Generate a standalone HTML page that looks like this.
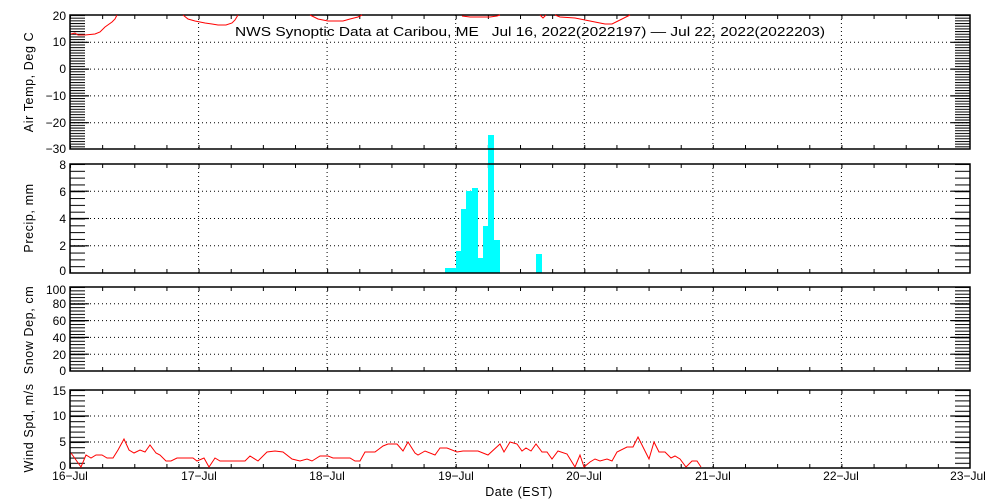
<!DOCTYPE html>
<html><head><meta charset="utf-8"><style>
html,body{margin:0;padding:0;background:#fff;}
svg{display:block;font-family:"Liberation Sans",sans-serif;font-size:12px;}
</style></head><body>
<svg width="1000" height="500" viewBox="0 0 1000 500" xmlns="http://www.w3.org/2000/svg">
<defs>
<pattern id="p1" x="0" y="15" width="20" height="2.68" patternUnits="userSpaceOnUse"><rect x="0" y="0" width="20" height="1" fill="#000"/></pattern>
<pattern id="p2" x="0" y="164" width="20" height="6.8125" patternUnits="userSpaceOnUse"><rect x="0" y="0" width="20" height="1" fill="#000"/></pattern>
<pattern id="p3" x="0" y="287" width="20" height="3.36" patternUnits="userSpaceOnUse"><rect x="0" y="0" width="20" height="1" fill="#000"/></pattern>
<pattern id="p4" x="0" y="390" width="20" height="5.2" patternUnits="userSpaceOnUse"><rect x="0" y="0" width="20" height="1" fill="#000"/></pattern>
<pattern id="px" x="70" y="0" width="32.143" height="10" patternUnits="userSpaceOnUse"><rect x="0" y="0" width="1" height="10" fill="#000"/></pattern>
</defs>
<rect width="1000" height="500" fill="#fff"/>

<rect x="70" y="15" width="15" height="134" fill="url(#p1)"/>
<rect x="955" y="15" width="15" height="134" fill="url(#p1)"/>
<rect x="70" y="164" width="15" height="109" fill="url(#p2)"/>
<rect x="955" y="164" width="15" height="109" fill="url(#p2)"/>
<rect x="70" y="287" width="15" height="84" fill="url(#p3)"/>
<rect x="955" y="287" width="15" height="84" fill="url(#p3)"/>
<rect x="70" y="390" width="15" height="78" fill="url(#p4)"/>
<rect x="955" y="390" width="15" height="78" fill="url(#p4)"/>
<g>
<rect x="70" y="15" width="900" height="4" fill="url(#px)"/>
<rect x="70" y="145" width="900" height="4" fill="url(#px)"/>
<rect x="70" y="164" width="900" height="4" fill="url(#px)"/>
<rect x="70" y="269" width="900" height="4" fill="url(#px)"/>
<rect x="70" y="287" width="900" height="4" fill="url(#px)"/>
<rect x="70" y="367" width="900" height="4" fill="url(#px)"/>
<rect x="70" y="390" width="900" height="4" fill="url(#px)"/>
<rect x="70" y="464" width="900" height="4" fill="url(#px)"/>
</g>

<g stroke="#000" stroke-width="1" stroke-dasharray="1,3" fill="none">
<path d="M70 42.3H970M70 69.1H970M70 95.9H970M70 122.7H970"/>
<path d="M70 191.2H970M70 218.5H970M70 245.8H970"/>
<path d="M70 303.8H970M70 320.6H970M70 337.4H970M70 354.2H970"/>
<path d="M70 416H970M70 442H970"/>
<path d="M198.6 15V149M327.1 15V149M455.7 15V149M584.3 15V149M712.9 15V149M841.4 15V149"/>
<path d="M198.6 164V273M327.1 164V273M455.7 164V273M584.3 164V273M712.9 164V273M841.4 164V273"/>
<path d="M198.6 287V371M327.1 287V371M455.7 287V371M584.3 287V371M712.9 287V371M841.4 287V371"/>
<path d="M198.6 390V468M327.1 390V468M455.7 390V468M584.3 390V468M712.9 390V468M841.4 390V468"/>
</g>
<g stroke="#000" stroke-width="1.2">
<path d="M70 42.3h19M70 69.1h19M70 95.9h19M70 122.7h19M951 42.3h19M951 69.1h19M951 95.9h19M951 122.7h19"/>
<path d="M70 191.2h19M70 218.5h19M70 245.8h19M951 191.2h19M951 218.5h19M951 245.8h19"/>
<path d="M70 303.8h19M70 320.6h19M70 337.4h19M70 354.2h19M951 303.8h19M951 320.6h19M951 337.4h19M951 354.2h19"/>
<path d="M70 416h19M70 442h19M951 416h19M951 442h19"/>
</g>

<g fill="#00ffff">
<rect x="445" y="268" width="11" height="5"/>
<rect x="456" y="251" width="5" height="22"/>
<rect x="461" y="209" width="5" height="64"/>
<rect x="466" y="191" width="6" height="82"/>
<rect x="472" y="188" width="6" height="85"/>
<rect x="478" y="258" width="5" height="15"/>
<rect x="483" y="226" width="5" height="47"/>
<rect x="488" y="135" width="6" height="138"/>
<rect x="494" y="240" width="6" height="33"/>
<rect x="536" y="254" width="6" height="19"/>
</g>

<g stroke="#000" stroke-width="1.5" fill="none">
<rect x="70" y="15" width="900" height="134"/>
<rect x="70" y="164" width="900" height="109"/>
<rect x="70" y="287" width="900" height="84"/>
<rect x="70" y="390" width="900" height="78"/>
</g>

<g stroke="#f00" stroke-width="1" fill="none">
<polyline points="71,34 75,33 78,35 85,35 95,34 100,32 105,27 112,22 115,19 117,15"/>
<polyline points="183,15 188,19 195,21 205,23 212,24 218,25 226,25 232,23 235,20 238,15"/>
<polyline points="310,15 318,19 328,21 343,21 350,19 358,17 362,15"/>
<polyline points="462,16 470,17 490,17 497,16 500,15"/>
<polyline points="540,15 543,18 546,15"/>
<polyline points="555,15 560,17 575,18 585,20 595,22 605,24 612,24 620,20 630,15"/>
</g>

<polyline stroke="#f00" stroke-width="1" fill="none" points="71,453 81,467 86,455 91,458 96,455 102,455 107,458 113,458 118,450 124,439 129,450 134,453 140,450 145,452 150,445 156,453 160,455 166,461 171,461 177,458 185,458 193,458 197,461 204,458 209,467 215,458 220,461 245,461 250,456 258,461 267,452 275,451 283,452 292,459 300,461 307,459 312,461 320,456 328,456 333,458 350,458 355,461 360,461 365,452 375,452 383,446 388,444 397,444 403,451 408,442 415,453 418,455 425,451 435,455 440,448 447,448 457,452 463,451 478,451 488,455 500,444 504,452 510,442 517,444 522,451 526,448 531,451 536,444 542,452 547,452 552,459 558,451 567,454 575,467 580,455 584,467 590,462 595,459 600,461 607,459 612,461 617,452 627,447 633,447 638,437 649,459 654,442 659,452 665,452 671,458 675,456 680,459 686,467 692,461 697,461 701,467"/>

<text x="235" y="36" fill="#000" font-size="13" textLength="590" lengthAdjust="spacingAndGlyphs" xml:space="preserve">NWS Synoptic Data at Caribou, ME   Jul 16, 2022(2022197) — Jul 22, 2022(2022203)</text>

<g text-anchor="end" fill="#000">
<text x="66" y="20">20</text><text x="66" y="46">10</text><text x="66" y="73">0</text>
<text x="66" y="100">−10</text><text x="66" y="127">−20</text><text x="66" y="153">−30</text>
<text x="66" y="169">8</text><text x="66" y="196">6</text><text x="66" y="223">4</text><text x="66" y="250">2</text><text x="66" y="275">0</text>
<text x="66" y="294">100</text><text x="66" y="308">80</text><text x="66" y="325">60</text><text x="66" y="342">40</text><text x="66" y="359">20</text><text x="66" y="375">0</text>
<text x="66" y="395">15</text><text x="66" y="420">10</text><text x="66" y="446">5</text><text x="66" y="470">0</text>
</g>
<g fill="#000" font-size="12.5" text-anchor="middle" letter-spacing="0.6">
<text transform="translate(33,82) rotate(-90)">Air Temp, Deg C</text>
<text transform="translate(33,218) rotate(-90)">Precip, mm</text>
<text transform="translate(33,330) rotate(-90)">Snow Dep, cm</text>
<text transform="translate(33,428) rotate(-90)">Wind Spd, m/s</text>
</g>
<g fill="#000" text-anchor="middle">
<text x="70" y="480">16−Jul</text><text x="199" y="480">17−Jul</text><text x="327" y="480">18−Jul</text>
<text x="456" y="480">19−Jul</text><text x="584" y="480">20−Jul</text><text x="713" y="480">21−Jul</text>
<text x="841" y="480">22−Jul</text><text x="968" y="480">23−Jul</text>
<text x="519" y="496" font-size="12.5" letter-spacing="0.5">Date (EST)</text>
</g>
</svg>
</body></html>
